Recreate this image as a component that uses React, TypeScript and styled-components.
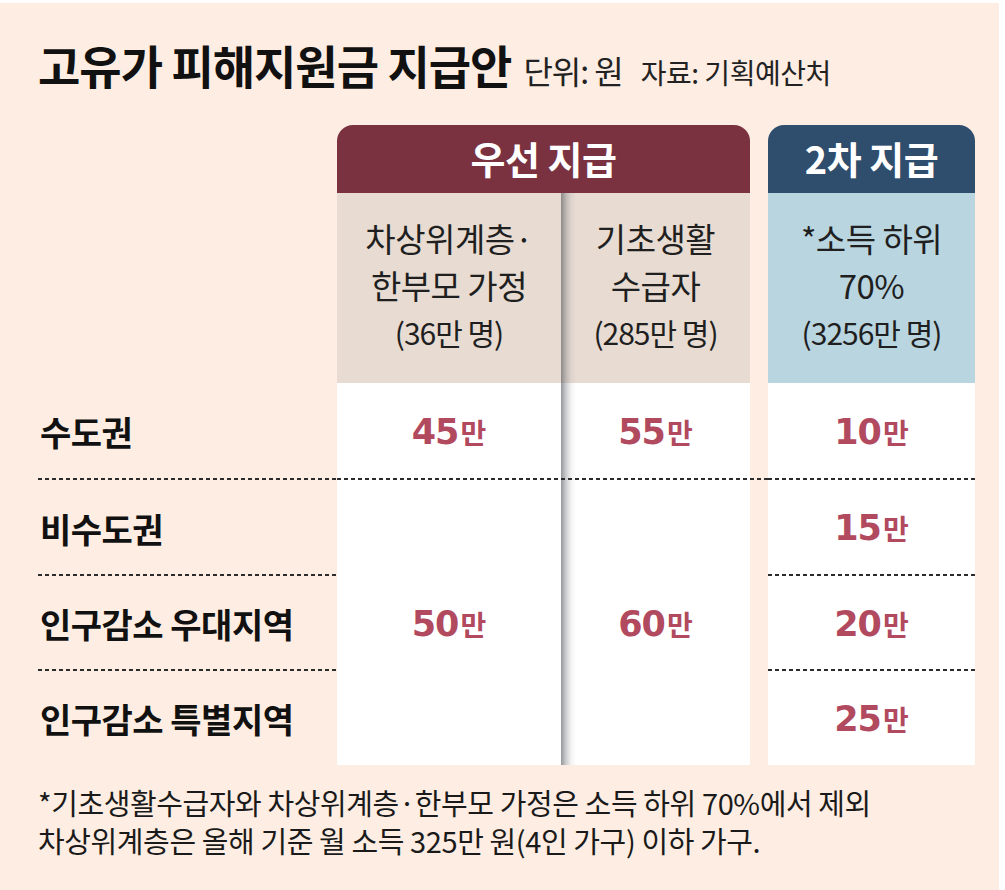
import React from 'react';
import styled, { createGlobalStyle } from 'styled-components';

const GlobalStyle = createGlobalStyle`
  html, body {
    margin: 0;
    padding: 0;
    background: #ffffff;
  }
  body {
    font-family: "Noto Sans CJK KR", "Noto Sans", sans-serif;
    color: #1a1a1a;
  }
`;

const PEACH = '#fdede2';
const WHITE = '#ffffff';
const BEIGE = '#e7dbd2';
const SKY = '#b9d5df';
const VALUE = '#b24a5f';

const Panel = styled.div`
  width: 999px;
  height: 887px;
  margin-top: 3px;
  background: ${PEACH};
  padding: 33px 0 0 38px;
  box-sizing: border-box;
`;

const TitleRow = styled.div`
  display: flex;
  align-items: baseline;
  height: 62px;
`;

const Title = styled.h1`
  margin: 0 12px 0 0;
  font-size: 46px;
  font-weight: 700;
  letter-spacing: -1px;
  line-height: 56px;
  color: #111;
`;

const Unit = styled.span`
  font-size: 32px;
  letter-spacing: -1px;
  color: #222;
`;

const Source = styled.span`
  font-size: 28px;
  letter-spacing: -0.5px;
  margin-left: 18px;
  color: #222;
`;

const Table = styled.div`
  display: grid;
  grid-template-columns: 299px 224px 189px 18px 207px;
  grid-template-rows: 68px 190px 97px 96px 95px 94px;
  margin-top: 27px;
`;

const Tab = styled.div<{ $tone: 'maroon' | 'navy'; $col: string }>`
  grid-column: ${(p) => p.$col};
  grid-row: 1;
  display: flex;
  align-items: center;
  justify-content: center;
  padding-bottom: 4px;
  background: ${(p) => (p.$tone === 'maroon' ? '#7a3241' : '#2f4d6c')};
  border-radius: 16px 16px 0 0;
  color: #fff;
  font-size: 38px;
  font-weight: 700;
  letter-spacing: -0.5px;
`;

const fold = `linear-gradient(to right, rgba(80, 82, 88, 0.6) 0px, rgba(120, 122, 128, 0.38) 5px, rgba(160, 162, 168, 0.14) 10px, rgba(255, 255, 255, 0) 15px)`;

const SubHead = styled.div<{ $col: number; $sky?: boolean; $fold?: boolean }>`
  grid-column: ${(p) => p.$col};
  grid-row: 2;
  display: flex;
  flex-direction: column;
  align-items: center;
  justify-content: center;
  padding-bottom: 6px;
  background-color: ${(p) => (p.$sky ? SKY : BEIGE)};
  background-image: ${(p) => (p.$fold ? fold : 'none')};
  font-size: 33px;
  line-height: 47px;
  letter-spacing: -0.5px;
  color: #1f1f1f;
`;

const Count = styled.span`
  font-size: 30px;
  letter-spacing: -1px;
`;

const dots = `linear-gradient(to right, #2b2b2b 57%, rgba(0, 0, 0, 0) 0)`;

const Label = styled.div<{ $row: number; $line?: boolean }>`
  grid-column: 1;
  grid-row: ${(p) => p.$row};
  display: flex;
  align-items: center;
  padding-left: 2px;
  font-size: 34px;
  font-weight: 700;
  letter-spacing: -0.5px;
  color: #111;
  background-image: ${(p) => (p.$line ? dots : 'none')};
  background-size: 7px 2px;
  background-repeat: repeat-x;
  background-position: left bottom;
`;

const Cell = styled.div<{
  $col: number;
  $row: string;
  $line?: boolean;
  $fold?: boolean;
  $blank?: boolean;
}>`
  grid-column: ${(p) => p.$col};
  grid-row: ${(p) => p.$row};
  display: flex;
  align-items: center;
  justify-content: center;
  padding-top: ${(p) => (p.$line ? '0' : '2px')};
  background-color: ${(p) => (p.$blank ? 'transparent' : WHITE)};
  background-image: ${(p) =>
    [p.$line ? dots : null, p.$fold ? fold : null].filter(Boolean).join(', ') || 'none'};
  background-size: ${(p) =>
    [p.$line ? '7px 2px' : null, p.$fold ? '100% 100%' : null].filter(Boolean).join(', ') ||
    'auto'};
  background-repeat: ${(p) =>
    [p.$line ? 'repeat-x' : null, p.$fold ? 'no-repeat' : null].filter(Boolean).join(', ') ||
    'no-repeat'};
  background-position: ${(p) =>
    [p.$line ? 'left bottom' : null, p.$fold ? 'left top' : null].filter(Boolean).join(', ') ||
    'left top'};
`;

const Amount = styled.span`
  display: inline-flex;
  align-items: baseline;
  color: ${VALUE};
  font-weight: 700;
`;

const Digits = styled.span`
  font-family: "DejaVu Sans", "Liberation Sans", sans-serif;
  font-size: 35px;
  letter-spacing: -1px;
`;

const Man = styled.span`
  font-size: 28px;
  margin-left: 2px;
`;

const Notes = styled.div`
  margin-top: 18px;
  font-size: 29px;
  line-height: 38px;
  letter-spacing: -0.4px;
  color: #1a1a1a;
`;

const Value: React.FC<{ n: string }> = ({ n }) => (
  <Amount>
    <Digits>{n}</Digits>
    <Man>만</Man>
  </Amount>
);

const App: React.FC = () => {
  return (
    <>
      <GlobalStyle />
      <Panel>
        <TitleRow>
          <Title>고유가 피해지원금 지급안</Title>
          <Unit>단위: 원</Unit>
          <Source>자료: 기획예산처</Source>
        </TitleRow>

        <Table>
          <Tab $tone="maroon" $col="2 / 4">우선 지급</Tab>
          <Tab $tone="navy" $col="5">2차 지급</Tab>

          <SubHead $col={2}>
            <span>차상위계층·</span>
            <span>한부모 가정</span>
            <Count>(36만 명)</Count>
          </SubHead>
          <SubHead $col={3} $fold>
            <span>기초생활</span>
            <span>수급자</span>
            <Count>(285만 명)</Count>
          </SubHead>
          <SubHead $col={5} $sky>
            <span>*소득 하위</span>
            <span>70%</span>
            <Count>(3256만 명)</Count>
          </SubHead>

          <Label $row={3} $line>수도권</Label>
          <Cell $col={2} $row="3" $line>
            <Value n="45" />
          </Cell>
          <Cell $col={3} $row="3" $line $fold>
            <Value n="55" />
          </Cell>
          <Cell $col={4} $row="3" $line $blank />
          <Cell $col={5} $row="3" $line>
            <Value n="10" />
          </Cell>

          <Label $row={4} $line>비수도권</Label>
          <Label $row={5} $line>인구감소 우대지역</Label>
          <Label $row={6}>인구감소 특별지역</Label>

          <Cell $col={2} $row="4 / 7">
            <Value n="50" />
          </Cell>
          <Cell $col={3} $row="4 / 7" $fold>
            <Value n="60" />
          </Cell>

          <Cell $col={5} $row="4" $line>
            <Value n="15" />
          </Cell>
          <Cell $col={5} $row="5" $line>
            <Value n="20" />
          </Cell>
          <Cell $col={5} $row="6">
            <Value n="25" />
          </Cell>
        </Table>

        <Notes>
          *기초생활수급자와 차상위계층·한부모 가정은 소득 하위 70%에서 제외
          <br />
          차상위계층은 올해 기준 월 소득 325만 원(4인 가구) 이하 가구.
        </Notes>
      </Panel>
    </>
  );
};

export default App;
